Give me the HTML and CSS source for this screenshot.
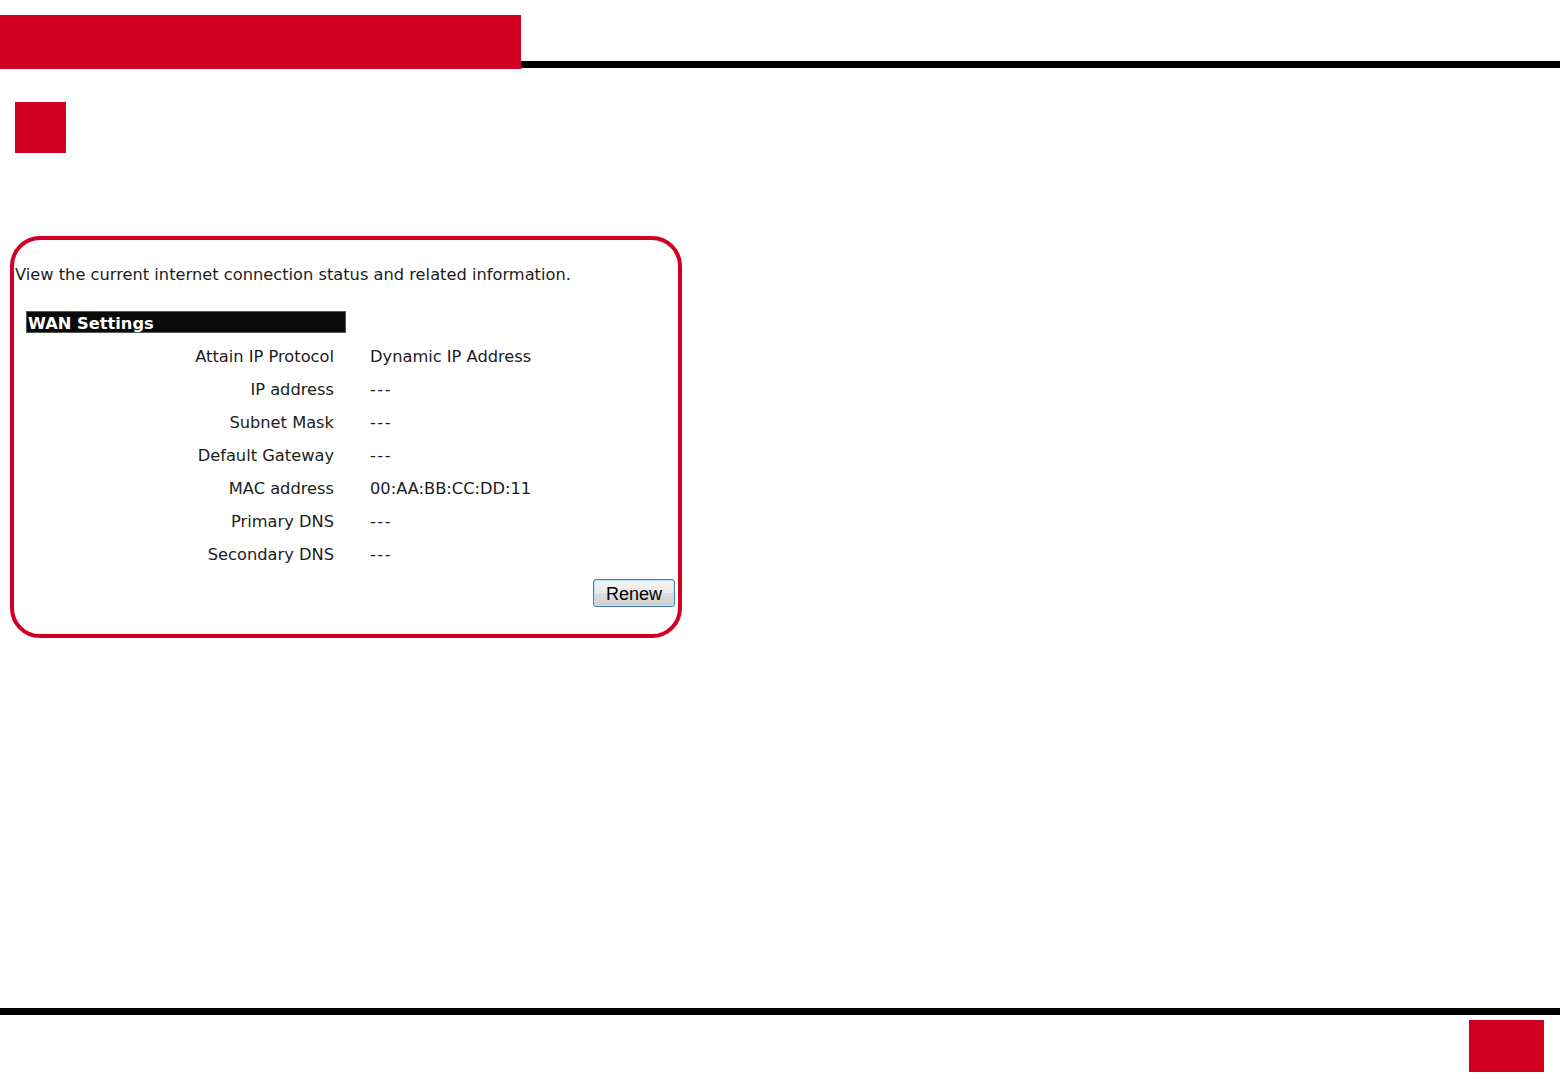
FILE: index.html
```html
<!DOCTYPE html>
<html lang="en">
<head>
<meta charset="utf-8">
<title>WAN Settings</title>
<link rel="stylesheet" href="styles.css">
</head>
<body>
<div class="page">
  <header class="topbar">
    <div class="topbar-red"></div>
    <div class="topbar-line"></div>
  </header>
  <div class="marker"></div>
  <section class="panel">
    <p class="intro">View the current internet connection status and related information.</p>
    <div class="wan">
      <div class="wan-head">WAN Settings</div>
      <div class="wan-grid">
        <div class="lbl">Attain IP Protocol</div><div class="val">Dynamic IP Address</div>
        <div class="lbl">IP address</div><div class="val dash">---</div>
        <div class="lbl">Subnet Mask</div><div class="val dash">---</div>
        <div class="lbl">Default Gateway</div><div class="val dash">---</div>
        <div class="lbl">MAC address</div><div class="val">00:AA:BB:CC:DD:11</div>
        <div class="lbl">Primary DNS</div><div class="val dash">---</div>
        <div class="lbl">Secondary DNS</div><div class="val dash">---</div>
      </div>
    </div>
    <div class="actions"><button class="btn" type="button">Renew</button></div>
  </section>
  <footer class="footer">
    <div class="footer-line"></div>
    <div class="footer-box"></div>
  </footer>
</div>
</body>
</html>
```
FILE: styles.css
```css
html, body {
  margin: 0;
  padding: 0;
  background: #ffffff;
}
.page {
  width: 1560px;
  height: 1080px;
  display: flex;
  flex-direction: column;
  overflow: hidden;
  font-family: "DejaVu Sans", "Liberation Sans", sans-serif;
  color: #1c1c1c;
}
.topbar {
  margin-top: 15px;
  display: flex;
  align-items: flex-end;
}
.topbar-red {
  width: 521px;
  height: 54px;
  background: #d10022;
}
.topbar-line {
  flex: 1;
  height: 7px;
  margin-bottom: 1px;
  background: #000;
}
.marker {
  width: 51px;
  height: 51px;
  margin: 33px 0 0 15px;
  background: #d10022;
}
.panel {
  box-sizing: border-box;
  width: 672px;
  height: 402px;
  margin: 83px 0 0 10px;
  border: 4px solid #d10022;
  border-radius: 30px;
  padding: 25px 3px 0 1px;
  display: flex;
  flex-direction: column;
}
.intro {
  margin: 0;
  font-size: 16.25px;
  line-height: 20px;
  height: 20px;
  white-space: nowrap;
}
.wan {
  margin: 26px 0 0 11px;
}
.wan-head {
  width: 320px;
  height: 22px;
  box-sizing: border-box;
  background: #0a0a0a;
  border: 1px solid #555;
  color: #fff;
  font-weight: bold;
  font-size: 16.25px;
  line-height: 21px;
  padding-left: 1px;
  padding-top: 1px;
}
.wan-grid {
  margin-top: 7px;
  display: grid;
  grid-template-columns: 320px 1fr;
  grid-auto-rows: 33px;
  font-size: 16.25px;
  line-height: 33px;
}
.lbl {
  text-align: right;
  padding-right: 12px;
  white-space: nowrap;
}
.val {
  padding-left: 24px;
  white-space: nowrap;
}
.dash {
  letter-spacing: 1.5px;
}
.actions {
  display: flex;
  justify-content: flex-end;
  margin-top: 8px;
}
.btn {
  width: 82px;
  height: 28px;
  box-sizing: border-box;
  border: 1px solid #3c7fb1;
  border-radius: 3px;
  box-shadow: inset 0 0 0 1px #bfe4f8;
  background: linear-gradient(#f4f4f4 0%, #ebebeb 50%, #dddddd 51%, #cfcfcf 100%);
  font-family: "Liberation Sans", Arial, sans-serif;
  font-size: 18px;
  color: #000;
  padding: 2px 0 0;
  line-height: 24px;
}
.footer {
  margin-top: auto;
  display: flex;
  flex-direction: column;
}
.footer-line {
  height: 7px;
  background: #000;
}
.footer-box {
  align-self: flex-end;
  width: 75px;
  height: 52px;
  margin: 5px 16px 8px 0;
  background: #d10022;
}
```
